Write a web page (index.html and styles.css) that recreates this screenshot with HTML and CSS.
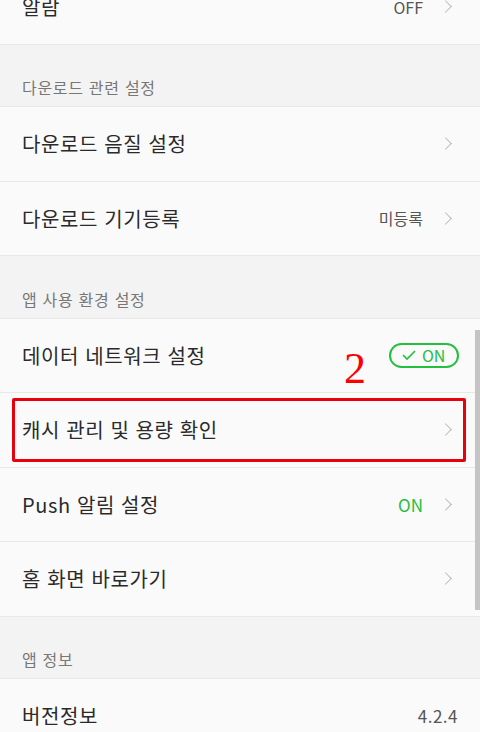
FILE: index.html
```html
<!DOCTYPE html>
<html lang="ko">
<head>
  <meta charset="utf-8" />
  <link rel="stylesheet" href="styles.css">
  <title>설정</title>
</head>
<body>
  <div class="settings">
    <div class="row row-first">
      <span class="row-title">알람</span>
      <span class="row-value">OFF</span>
      <span class="chevron"></span>
    </div>

    <div class="section">다운로드 관련 설정</div>
    <div class="row">
      <span class="row-title">다운로드 음질 설정</span>
      <span class="chevron"></span>
    </div>
    <div class="row">
      <span class="row-title">다운로드 기기등록</span>
      <span class="row-value">미등록</span>
      <span class="chevron"></span>
    </div>

    <div class="section">앱 사용 환경 설정</div>
    <div class="row">
      <span class="row-title">데이터 네트워크 설정</span>
      <span class="toggle">
        <svg width="16" height="12" viewBox="0 0 16 12"><path d="M2 6l4 4 8-8" fill="none" stroke="#22c03c" stroke-width="1.6"/></svg>
        ON
      </span>
      <span class="mark">2</span>
    </div>
    <div class="row row-marked">
      <span class="row-title">캐시 관리 및 용량 확인</span>
      <span class="chevron"></span>
    </div>
    <div class="row">
      <span class="row-title">Push 알림 설정</span>
      <span class="row-value on">ON</span>
      <span class="chevron"></span>
    </div>
    <div class="row">
      <span class="row-title">홈 화면 바로가기</span>
      <span class="chevron"></span>
    </div>

    <div class="section">앱 정보</div>
    <div class="row">
      <span class="row-title">버전정보</span>
      <span class="row-value version">4.2.4</span>
    </div>

    <div class="scrollbar"></div>
  </div>
</body>
</html>
```

FILE: styles.css
```css
html, body {
  margin: 0;
  height: 100%;
  overflow: hidden;
}
body {
  font-family: "Noto Sans CJK KR", "Noto Sans", sans-serif;
  background: #f3f3f3;
  color: #222;
}
.settings {
  position: relative;
  width: 480px;
}
.row {
  position: relative;
  display: flex;
  align-items: center;
  height: 74.5px;
  padding: 0 28px 0 22px;
  background: #fafafa;
  border-bottom: 1px solid #e8e8e8;
  box-sizing: border-box;
}
.row-first {
  margin-top: -30px;
}
.row-title {
  flex: 1;
  font-size: 20px;
  letter-spacing: 0.6px;
  color: #2a2a2a;
}
.row-value {
  font-size: 16px;
  color: #555;
  margin-right: 18px;
}
.row-value.on {
  color: #1fbf3a;
  font-size: 17px;
}
.row-value.version {
  margin-right: -6px;
  font-size: 17px;
  letter-spacing: 0.5px;
}
.chevron {
  width: 8px;
  height: 8px;
  border-top: 1.5px solid #bbb;
  border-right: 1.5px solid #bbb;
  transform: rotate(45deg);
  margin-right: 2px;
}
.section {
  height: 62.5px;
  padding: 0 22px 7px;
  box-sizing: border-box;
  display: flex;
  align-items: flex-end;
  font-size: 16px;
  letter-spacing: 0.7px;
  color: #777;
  border-bottom: 1px solid #e8e8e8;
}
.toggle {
  display: flex;
  align-items: center;
  gap: 5px;
  width: 70px;
  height: 25px;
  box-sizing: border-box;
  border: 2px solid #22c03c;
  border-radius: 13px;
  padding-left: 10px;
  font-size: 16px;
  color: #22c03c;
  margin-right: -7px;
}
.mark {
  position: absolute;
  left: 344px;
  top: 28px;
  font-family: "Liberation Serif", serif;
  font-size: 44px;
  line-height: 44px;
  color: #f00;
}
.row-marked::after {
  content: "";
  position: absolute;
  left: 12px;
  right: 14px;
  top: 5px;
  bottom: 5px;
  border: 3px solid #e8000b;
  border-radius: 2px;
}
.scrollbar {
  position: absolute;
  right: 0;
  top: 360px;
  width: 5px;
  height: 280px;
  background: #c4c4c4;
}
```
